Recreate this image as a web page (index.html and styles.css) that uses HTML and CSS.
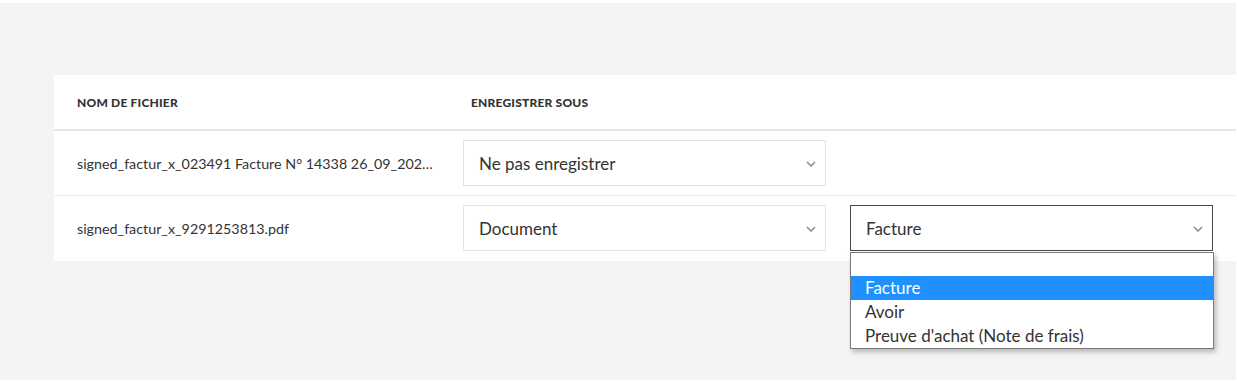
FILE: index.html
```html
<!DOCTYPE html>
<html lang="fr">
<head>
    <meta charset="UTF-8">
    <title>Enregistrer les fichiers</title>
    <link rel="stylesheet" href="styles.css">
</head>
<body>

<div class="page">
    <div class="card">
        <div class="row head">
            <div class="cell name">Nom de fichier</div>
            <div class="cell type">Enregistrer sous</div>
            <div class="cell sub"></div>
        </div>

        <div class="row line">
            <div class="cell name">signed_factur_x_023491 Facture N° 14338 26_09_2024.pdf</div>
            <div class="cell type">
                <div class="select">
                    <span>Ne pas enregistrer</span>
                    <svg class="chevron" width="10" height="6" viewBox="0 0 10 6"><polyline points="1,1 5,5 9,1" fill="none" stroke="#8a8a8a" stroke-width="1.5"/></svg>
                </div>
            </div>
            <div class="cell sub"></div>
        </div>

        <div class="row">
            <div class="cell name">signed_factur_x_9291253813.pdf</div>
            <div class="cell type">
                <div class="select">
                    <span>Document</span>
                    <svg class="chevron" width="10" height="6" viewBox="0 0 10 6"><polyline points="1,1 5,5 9,1" fill="none" stroke="#8a8a8a" stroke-width="1.5"/></svg>
                </div>
            </div>
            <div class="cell sub">
                <div class="select open">
                    <span>Facture</span>
                    <svg class="chevron" width="10" height="6" viewBox="0 0 10 6"><polyline points="1,1 5,5 9,1" fill="none" stroke="#8a8a8a" stroke-width="1.5"/></svg>
                    <!-- liste déroulante ouverte -->
                    <ul class="options">
                        <li class="empty"></li>
                        <li class="active">Facture</li>
                        <li>Avoir</li>
                        <li>Preuve d'achat (Note de frais)</li>
                    </ul>
                </div>
            </div>
        </div>
    </div>
</div>

</body>
</html>
```

FILE: styles.css
```css
body {
    margin: 0;
    background: white;
    font-family: 'Lato', 'Open Sans', sans-serif;
    color: #333;
}
.page {
    margin-top: 3px;
    width: 1236px;
    height: 377px;
    background: #f4f4f4;
    padding-top: 72px;
    box-sizing: border-box;
}
.card {
    margin-left: 54px;
    padding-bottom: 1px;
    background: white;
}
.row {
    display: flex;
    align-items: center;
    height: 64px;
    padding: 0 23px;
}
.row.line {
    border-bottom: 1px solid #ebebeb;
}
.row.head {
    height: 54px;
    border-bottom: 2px solid #e6e6e6;
}
.cell.name {
    width: 362px;
    padding-right: 24px;
    font-size: 14.3px;
    white-space: nowrap;
    overflow: hidden;
    text-overflow: ellipsis;
}
.cell.type {
    width: 363px;
    margin-right: 24px;
}
.cell.sub {
    width: 363px;
}
.head .cell {
    font-size: 12px;
    font-weight: 900;
    letter-spacing: 0.2px;
    text-transform: uppercase;
    color: #333;
}
.head .cell.type {
    padding-left: 8px;
    width: 355px;
}
.select {
    position: relative;
    display: flex;
    align-items: center;
    justify-content: space-between;
    height: 46px;
    padding: 1px 9px 0 15px;
    border: 1px solid #e3e3e3;
    box-sizing: border-box;
    font-size: 17px;
    color: #333;
}
.select.open {
    border-color: #4a4a4a;
}
.options {
    position: absolute;
    top: 46px;
    left: -1px;
    width: 364px;
    margin: 0;
    padding: 0;
    list-style: none;
    background: white;
    border: 1px solid #7a7a7a;
    box-sizing: border-box;
    box-shadow: 2px 3px 5px rgba(0,0,0,0.25);
    z-index: 10;
}
.options li {
    height: 24px;
    line-height: 24px;
    padding-left: 14px;
    font-size: 17px;
    color: #333;
}
.options li.empty {
    height: 23px;
}
.options li.active {
    background: #1e90ff;
    color: white;
}
```
